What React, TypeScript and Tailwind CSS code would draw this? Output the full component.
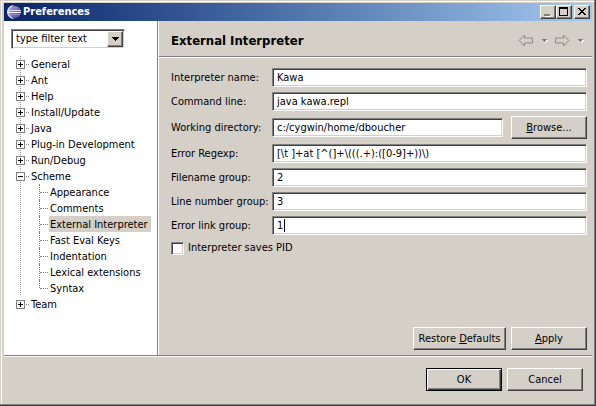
import { useState } from 'react';
import type { ReactNode } from 'react';

const raised =
  'border border-t-white border-l-white border-r-[#404040] border-b-[#404040] bg-[#d4d0c8] shadow-[inset_-1px_-1px_0_#808080]';
const sunken =
  'border border-t-[#808080] border-l-[#808080] border-r-white border-b-white bg-white shadow-[inset_1px_1px_0_#404040,inset_-1px_-1px_0_#d4d0c8]';

type Node = { label: string; children?: string[] };

const tree: Node[] = [
  { label: 'General' },
  { label: 'Ant' },
  { label: 'Help' },
  { label: 'Install/Update' },
  { label: 'Java' },
  { label: 'Plug-in Development' },
  { label: 'Run/Debug' },
  {
    label: 'Scheme',
    children: [
      'Appearance',
      'Comments',
      'External Interpreter',
      'Fast Eval Keys',
      'Indentation',
      'Lexical extensions',
      'Syntax',
    ],
  },
  { label: 'Team' },
];

function EclipseLogo() {
  return (
    <svg width="16" height="16" viewBox="0 0 16 16" aria-hidden="true">
      <defs>
        <linearGradient id="sphere" x1="0" x2="1" y1="0" y2="1">
          <stop offset="0" stopColor="#a9a2d6" />
          <stop offset="1" stopColor="#4a4593" />
        </linearGradient>
      </defs>
      <path d="M8 1A7 7 0 0 0 8 15A9 9 0 0 1 8 1Z" fill="#d8cfe4" />
      <circle cx="9" cy="8" r="6" fill="url(#sphere)" />
      <path d="M1 6.5h14" stroke="#d9d6f0" />
      <path d="M1 8.5h14" stroke="#f2f0fb" />
      <path d="M3 10.5h11" stroke="#9a94cc" />
    </svg>
  );
}

function WindowButton({ label, children }: { label: string; children: ReactNode }) {
  return (
    <button type="button" aria-label={label} className={`h-[14px] w-4 ${raised}`}>
      <svg width="14" height="12" viewBox="0 0 14 12" shapeRendering="crispEdges">
        {children}
      </svg>
    </button>
  );
}

function TitleBar() {
  return (
    <header className="flex h-[18px] items-center bg-linear-to-r from-[#0a246a] to-[#a6caf0] pr-[2px] pl-[2px]">
      <EclipseLogo />
      <h1 className="ml-px flex-1 text-[11px] leading-4 font-bold text-white">Preferences</h1>
      <WindowButton label="Minimize">
        <path d="M4 9h6v2H4z" fill="#fff" />
        <path d="M3 8h6v2H3z" fill="#808080" />
      </WindowButton>
      <WindowButton label="Maximize">
        <path d="M2 1h9v9H2zM3 3v6h7V3z" fill="#000" fillRule="evenodd" />
      </WindowButton>
      <span className="w-[2px]" />
      <WindowButton label="Close">
        <path
          d="M3 2h2v1h1v1h2V3h1V2h2v1h-1v1H9v1H8v1h1v1h1v1h1v1H9V8H8V7H6v1H5v1H3V8h1V7h1V6h1V5H5V4H4V3H3z"
          fill="#000"
        />
      </WindowButton>
    </header>
  );
}

function Sidebar() {
  const [open, setOpen] = useState<string[]>(['Scheme']);
  const [selected, setSelected] = useState('External Interpreter');

  const toggle = (label: string) =>
    setOpen(open.includes(label) ? open.filter((o) => o !== label) : [...open, label]);

  return (
    <nav className="w-[155px] shrink-0 border-r border-white bg-white">
      <div className="h-full border-r border-[#808080] pt-2 pl-[7px]">
        <div className={`relative h-5 w-[114px] ${sunken}`}>
          <select aria-label="Filter" className="h-full w-full appearance-none pl-1 outline-none">
            <option>type filter text</option>
          </select>
          <span
            className={`pointer-events-none absolute top-px right-px flex h-4 w-4 items-center justify-center ${raised}`}
          >
            <svg width="7" height="4" viewBox="0 0 7 4" shapeRendering="crispEdges">
              <path d="M0 0h7v1H6v1H5v1H4v1H3V3H2V2H1V1H0z" />
            </svg>
          </span>
        </div>
        <ul className="mt-[7px] pl-[5px]">
          {tree.map((node, i) => (
            <li
              key={node.label}
              className={i < tree.length - 1 ? 'bg-[length:1px_2px] bg-[position:4px_0] bg-repeat-y bg-[image:linear-gradient(#a0a0a0_1px,transparent_1px)]' : ''}
            >
              <div className="flex h-4 items-center">
                <button
                  type="button"
                  aria-label={`Toggle ${node.label}`}
                  onClick={() => toggle(node.label)}
                  className="h-[9px] w-[9px] border border-[#808080] bg-white"
                >
                  <svg width="7" height="7" viewBox="0 0 7 7" shapeRendering="crispEdges">
                    <path
                      d={open.includes(node.label) ? 'M1 3h5v1H1z' : 'M1 3h5v1H1zM3 1h1v5H3z'}
                    />
                  </svg>
                </button>
                <span className="mr-[2px] ml-px w-[3px] border-t border-dotted border-[#808080]" />
                <button type="button" className="pt-[2px] whitespace-nowrap">
                  {node.label}
                </button>
              </div>
              {node.children && open.includes(node.label) && (
                <ul className="ml-[23px]">
                  {node.children.map((child, j) => (
                    <li key={child} className="flex h-4">
                      <span
                        className={`w-px border-l border-dotted border-[#808080] ${j === node.children!.length - 1 ? 'h-2' : 'h-4'}`}
                      />
                      <span className="mt-2 mr-px w-2 border-t border-dotted border-[#808080]" />
                      <button
                        type="button"
                        onClick={() => setSelected(child)}
                        className={`h-4 px-px pr-[3px] leading-[18px] whitespace-nowrap ${selected === child ? 'bg-[#d4d0c8]' : ''}`}
                      >
                        {child}
                      </button>
                    </li>
                  ))}
                </ul>
              )}
            </li>
          ))}
        </ul>
      </div>
    </nav>
  );
}

function Caret() {
  return (
    <svg width="6" height="4" viewBox="0 0 6 4" shapeRendering="crispEdges">
      <path d="M1 1h5v1H5v1H4v1H3V3H2V2H1z" fill="#fff" />
      <path d="M0 0h5v1H4v1H3v1H2V2H1V1H0z" fill="#808080" />
    </svg>
  );
}

function Arrow({ flip }: { flip?: boolean }) {
  return (
    <svg
      width="16"
      height="13"
      viewBox="0 0 16 13"
      className={flip ? '-scale-x-100' : ''}
      fill="#d4d0c8"
      stroke="#8c8a84"
    >
      <path d="M1 6.5 6.5 1v3h8v5h-8v3z" />
    </svg>
  );
}

function PageHeader() {
  return (
    <div className="border-b border-white">
      <div className="flex h-9 items-center border-b border-[#808080] pt-1 pr-2 pl-3">
        <h2 className="flex-1 text-[13px] leading-4 font-bold">External Interpreter</h2>
        <button type="button" aria-label="Back">
          <Arrow />
        </button>
        <button type="button" aria-label="Back history" className="ml-2">
          <Caret />
        </button>
        <button type="button" aria-label="Forward" className="ml-[6px]">
          <Arrow flip />
        </button>
        <button type="button" aria-label="Forward history" className="ml-2">
          <Caret />
        </button>
      </div>
    </div>
  );
}

function PushButton({ className = 'w-[76px]', children }: { className?: string; children: ReactNode }) {
  return (
    <button type="button" className={`h-[23px] whitespace-nowrap ${raised} ${className}`}>
      {children}
    </button>
  );
}

function Field({
  id,
  label,
  value,
  action,
  active,
}: {
  id: string;
  label: string;
  value: string;
  action?: ReactNode;
  active?: boolean;
}) {
  return (
    <div className="flex items-center">
      <label htmlFor={id} className="w-[101px] shrink-0 whitespace-nowrap">
        {label}
      </label>
      <div className="relative flex min-w-0 flex-1">
        <input
          id={id}
          type="text"
          defaultValue={value}
          className={`h-[19px] w-full min-w-0 px-1 outline-none ${sunken}`}
        />
        {active && <span className="absolute top-[3px] left-3 h-[13px] w-px bg-black" />}
      </div>
      {action && <div className="ml-2 flex">{action}</div>}
    </div>
  );
}

export default function App() {
  return (
    <div className="flex min-h-screen flex-col border-r border-b border-[#404040] bg-[#d4d0c8] font-['Tahoma','DejaVu_Sans_Condensed',sans-serif] text-[11px] leading-4 text-black">
      <div className="flex flex-1 flex-col border-r border-b border-[#808080] pt-px pl-px">
        <div className="flex flex-1 flex-col border-t border-l border-white pt-px pr-[2px] pb-[2px] pl-[2px]">
          <TitleBar />
          <div className="flex flex-1 border-b border-[#808080]">
            <Sidebar />
            <main className="flex min-w-0 flex-1 flex-col">
              <PageHeader />
              <form className="flex flex-1 flex-col gap-[5px] px-[5px] pt-[10px] pb-[5px] pl-3">
                <Field id="name" label="Interpreter name:" value="Kawa" />
                <Field id="command" label="Command line:" value="java kawa.repl" />
                <Field
                  id="directory"
                  label="Working directory:"
                  value="c:/cygwin/home/dboucher"
                  action={
                    <PushButton>
                      <u>B</u>rowse...
                    </PushButton>
                  }
                />
                <Field id="regexp" label="Error Regexp:" value="[\t ]+at [^(]+\(((.+):([0-9]+))\)" />
                <Field id="filename" label="Filename group:" value="2" />
                <Field id="line" label="Line number group:" value="3" />
                <Field id="link" label="Error link group:" value="1" active />
                <label className="flex items-center gap-1">
                  <input
                    type="checkbox"
                    className={`h-[13px] w-[13px] appearance-none checked:bg-black ${sunken}`}
                  />
                  Interpreter saves PID
                </label>
                <div className="mt-auto flex justify-end gap-[5px]">
                  <PushButton className="w-[93px]">
                    Restore <u>D</u>efaults
                  </PushButton>
                  <PushButton>
                    <u>A</u>pply
                  </PushButton>
                </div>
              </form>
            </main>
          </div>
          <footer className="flex justify-end gap-[5px] border-t border-white pt-[11px] pr-[9px] pb-[11px]">
            <div className="flex">
              <button
                type="submit"
                className="h-[23px] w-[76px] border border-black bg-[#d4d0c8] shadow-[inset_1px_1px_0_#ffffff,inset_-1px_-1px_0_#404040,inset_-2px_-2px_0_#808080]"
              >
                OK
              </button>
            </div>
            <PushButton>Cancel</PushButton>
          </footer>
        </div>
      </div>
    </div>
  );
}
